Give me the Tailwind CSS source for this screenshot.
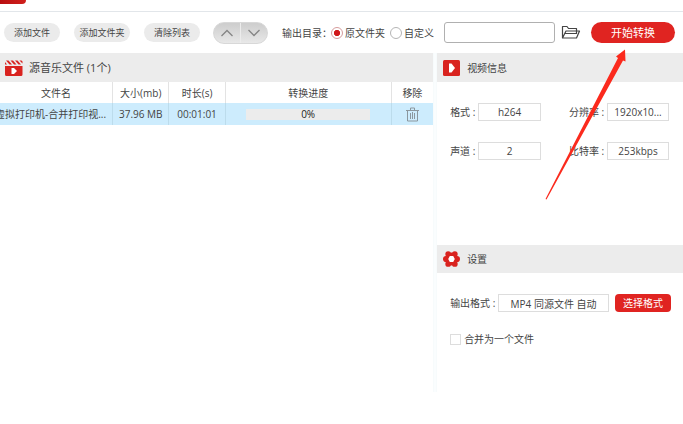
<!DOCTYPE html>
<html lang="zh-CN">
<head>
<meta charset="utf-8">
<meta name="viewport" content="width=device-width, initial-scale=1">
<title>视频转换</title>
<script src="https://cdn.jsdelivr.net/npm/@tailwindcss/browser@4"></script>
</head>
<body class="relative min-h-screen overflow-x-hidden bg-white font-['Open_Sans','Noto_Sans_CJK_SC',sans-serif] text-[10px] leading-4 text-[#444]">
  <header class="h-3 border-b border-[#e2e6ea]">
    <div class="h-1 w-[26px] rounded-br-sm bg-linear-to-r from-[#b80d10] to-[#d0201c]"></div>
  </header>

  <div class="flex h-[41px] items-center pr-2 pl-1">
    <div class="flex gap-[14px] text-[9px]">
      <button type="button" class="h-[19px] w-14 rounded-full bg-[#ebebeb]">添加文件</button>
      <button type="button" class="h-[19px] w-14 rounded-full bg-[#ebebeb]">添加文件夹</button>
      <button type="button" class="h-[19px] w-14 rounded-full bg-[#ebebeb]">清除列表</button>
    </div>
    <div class="ml-[13px] flex h-[22px] w-[55px] overflow-hidden rounded-full border border-[#d8d8d8] bg-linear-to-b from-[#cdcdcd] to-[#e8e8e8]">
      <button type="button" aria-label="上移" class="flex flex-1 items-center justify-center border-r border-[#ececec]">
        <svg class="h-2 w-3" viewBox="0 0 12 8" fill="none" stroke="#858585" stroke-width="1.3"><path d="M.5 7 6 1.500 11.500 7"/></svg>
      </button>
      <button type="button" aria-label="下移" class="flex flex-1 items-center justify-center">
        <svg class="h-2 w-3" viewBox="0 0 12 8" fill="none" stroke="#858585" stroke-width="1.3"><path d="M.5 1 6 6.500 11.500 1"/></svg>
      </button>
    </div>
    <fieldset class="ml-[14px] flex shrink-0 items-center">
      <legend class="float-left w-[49px] whitespace-nowrap">输出目录：</legend>
      <label class="flex items-center gap-[2px] whitespace-nowrap">
        <input type="radio" name="dir" checked class="size-3 appearance-none rounded-full border border-[#d69c9c] bg-white bg-radial from-[#d0181c] from-40% to-white to-50%">原文件夹
      </label>
      <label class="ml-[5px] flex items-center gap-[2px] whitespace-nowrap">
        <input type="radio" name="dir" class="size-3 appearance-none rounded-full border border-[#b5b5b5] bg-white">自定义
      </label>
    </fieldset>
    <input type="text" aria-label="自定义目录" class="ml-[10px] h-[21px] min-w-0 flex-1 rounded-[3px] border border-[#b0b0b0] px-1">
    <button type="button" aria-label="浏览文件夹" class="ml-[6px] shrink-0">
      <svg class="h-[15px] w-5" viewBox="0 0 20 15" fill="none" stroke="#444" stroke-width="1.2" stroke-linejoin="round"><path d="M1.500 13V1.500H6L7.500 3.500H15.500V6M1.500 13 5 6H18.500L15.500 13ZM4 8.500H15.500V6"/></svg>
    </button>
    <button type="button" class="ml-[10px] h-[21px] w-[84px] shrink-0 rounded-full bg-[#e02421] text-[11px] text-white">开始转换</button>
  </div>

  <main class="flex min-h-[339px]">
    <section class="min-w-0 flex-1">
      <h2 class="flex h-[29px] items-center gap-[6px] bg-[#ececec] pl-[5px]">
        <svg class="h-4 w-[18px]" viewBox="0 0 18 16" fill="#d9231f"><path d="M0 6h17.500v8.500a1.500 1.500 0 0 1-1.500 1.500h-14.500a1.500 1.500 0 0 1-1.500-1.500zM0 4.500V2L2 4.500zM1 .5h2.500L7 4.500H4.500zM5.500.5H8l3.500 4H9zM10 .5h2.500l3.500 4h-2.500zM14.500.5h2l1 1V3.500z"/><path d="M6.500 8h2.500l3 3-3 3H6.500z" fill="#fff"/></svg>
        <span class="text-[11px]">源音乐文件 (1个)</span>
      </h2>
      <table class="w-full table-fixed border-collapse text-center">
        <colgroup><col class="w-[26%]"><col class="w-[13%]"><col class="w-[13%]"><col><col class="w-[42px]"></colgroup>
        <thead>
          <tr class="h-[21px] *:border-r *:border-[#e3e3e3] *:p-0 *:font-normal">
            <th scope="col">文件名</th><th scope="col">大小(mb)</th><th scope="col">时长(s)</th><th scope="col">转换进度</th><th scope="col" class="border-r-0!">移除</th>
          </tr>
        </thead>
        <tbody>
          <tr class="h-[22px] bg-[#cdecfd] *:border-r *:border-[#bcdcec] *:p-0">
            <td><div class="flex justify-end overflow-hidden pr-[6px] whitespace-nowrap"><span>虚拟打印机-合并打印视...</span></div></td>
            <td>37.96 MB</td>
            <td>00:01:01</td>
            <td><div class="mx-auto flex h-[11px] w-3/4 items-center justify-center bg-[#ececec] text-[#222]">0%</div></td>
            <td class="border-r-0!">
              <button type="button" aria-label="移除文件" class="block mx-auto">
                <svg class="h-[15px] w-[13px]" viewBox="0 0 13 15" fill="none" stroke="#8b979e" stroke-width="1"><path d="M0 3.500H13M4.500 3V1H8.500V3M1.500 3.500V14H11.500V3.500M4.500 6V12M6.500 5V12M8.500 6V12"/></svg>
              </button>
            </td>
          </tr>
        </tbody>
      </table>
    </section>

    <div class="w-1 shrink-0 border-x border-[#f7fbfc] bg-[#fafdfe]"></div>

    <aside class="w-[36%] shrink-0">
      <section class="h-[192px]">
        <h2 class="flex h-[29px] items-center gap-[7px] bg-[#ececec] pl-[6px]">
          <svg class="h-4 w-[17px]" viewBox="0 0 17 16"><rect width="17" height="16" rx="1.500" fill="#d9231f"/><path d="M6 3.500h2.500l3.500 4.500-3.500 4.500H6z" fill="#fff"/></svg>
          视频信息
        </h2>
        <dl class="mt-[21px] grid grid-cols-[minmax(0,1fr)_100px] gap-y-[21px] pr-[14px] pl-[13px] *:flex *:items-center">
          <div><dt class="w-7 whitespace-nowrap">格式 :</dt><dd class="h-[18px] w-[63px] border border-[#ddd] text-center">h264</dd></div>
          <div><dt class="w-[38px] whitespace-nowrap">分辨率 :</dt><dd class="h-[18px] w-[62px] border border-[#ddd] text-center">1920x10...</dd></div>
          <div><dt class="w-7 whitespace-nowrap">声道 :</dt><dd class="h-[18px] w-[63px] border border-[#ddd] text-center">2</dd></div>
          <div><dt class="w-[38px] whitespace-nowrap">比特率 :</dt><dd class="h-[18px] w-[62px] border border-[#ddd] text-center">253kbps</dd></div>
        </dl>
      </section>

      <section>
        <h2 class="flex h-7 items-center gap-[7px] bg-[#ececec] pl-[6px]">
          <svg class="h-4 w-[17px]" viewBox="0 0 17 16"><g fill="#d9231f"><circle cx="8.500" cy="8" r="6.500"/><circle cx="13.900" cy="8" r="3.100"/><circle cx="3.100" cy="8" r="3.100"/><circle cx="11.800" cy="3.100" r="2.900"/><circle cx="5.200" cy="3.100" r="2.900"/><circle cx="11.800" cy="12.900" r="2.900"/><circle cx="5.200" cy="12.900" r="2.900"/></g><path d="M5.200 8 6.800 5h3.400l1.600 3-1.600 3H6.800z" fill="#fff"/></svg>
          设置
        </h2>
        <div class="mt-[21px] flex items-center pr-3 pl-[13px]">
          <label for="format" class="w-12 shrink-0 whitespace-nowrap">输出格式 :</label>
          <input id="format" type="text" readonly value="MP4 同源文件 自动" class="h-[18px] min-w-0 flex-1 border border-[#ddd] text-center">
          <button type="button" class="ml-[6px] h-[18px] w-14 shrink-0 rounded bg-[#e02421] text-white">选择格式</button>
        </div>
        <label class="mt-[19px] flex items-center gap-[3px] pl-[13px]">
          <input type="checkbox" class="size-[11px] appearance-none border border-[#ddd] bg-white">合并为一个文件
        </label>
      </section>
    </aside>
  </main>

  <svg class="pointer-events-none absolute top-12 right-[54px] h-[152px] w-[84px]" viewBox="0 0 84 152" fill="#fb2a1d" aria-hidden="true"><path d="M80 1.500 71 8.500l2 1.500L.5 151l1 .5L78 12.500l2.500 1z"/></svg>
</body>
</html>
